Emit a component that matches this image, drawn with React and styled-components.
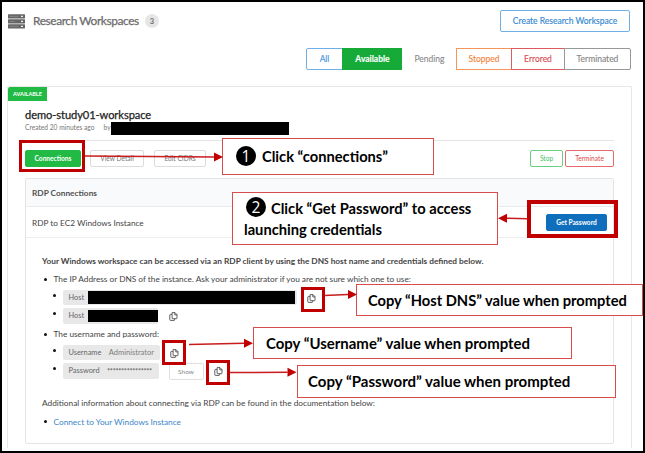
import React from "react";
import styled, { createGlobalStyle } from "styled-components";

const GlobalStyle = createGlobalStyle`
  *, *::before, *::after { box-sizing: border-box; }
  body { margin: 0; background: #fff; font-family: Lato, "Liberation Sans", sans-serif; color: #444; }
  button { font-family: inherit; margin: 0; padding: 0; }
  ul { list-style: none; margin: 0; padding: 0; }
  h1, h2, h3, p { margin: 0; }
`;

const Page = styled.main`
  position: relative;
  width: 645px;
  height: 453px;
  border: 2px solid #000;
  overflow: hidden;
  white-space: nowrap;
`;
const Header = styled.header`
  display: flex;
  justify-content: space-between;
  align-items: flex-start;
  height: 46px;
  padding: 8px 13px 0 6px;
`;
const TitleGroup = styled.div`
  display: flex;
  align-items: center;
  height: 24px;
  margin-top: -1px;
`;
const Title = styled.h1`
  margin-left: 8px;
  width: 106px;
  font-size: 11.9px;
  letter-spacing: -0.4px;
  line-height: 16px;
  font-weight: 400;
  color: #6b6b6b;
  -webkit-text-stroke: 0.25px #6b6b6b;
`;
const Count = styled.span`
  margin-left: 6px;
  width: 14px;
  height: 14px;
  border-radius: 50%;
  background: #e6e6e6;
  color: #6d6d6d;
  font-size: 7.5px;
  font-weight: 700;
  line-height: 15px;
  text-align: center;
`;
const CreateButton = styled.button`
  width: 130px;
  height: 22px;
  border: 1px solid #70aee6;
  border-radius: 2px;
  background: #fff;
  color: #3588d2;
  font-size: 8.5px;
  -webkit-text-stroke: 0.15px currentColor;
`;
const Filters = styled.nav`
  display: flex;
  justify-content: flex-end;
  height: 38px;
  padding-right: 12px;
`;
const tones = {
  blue: ["#fff", "#3e90da", "#70aee6"],
  green: ["#16ab39", "#fff", "#16ab39"],
  plain: ["#fff", "#8b8b8b", "transparent"],
  orange: ["#fff", "#f2843b", "#f4965a"],
  red: ["#fff", "#dc4a50", "#df5a60"],
  grey: ["#fff", "#858585", "#989898"],
};
const Filter = styled.button`
  width: ${(p) => p.$width}px;
  height: 22px;
  margin-right: ${(p) => (p.$tone === "grey" ? 0 : -1)}px;
  border: 1px solid ${(p) => tones[p.$tone][2]};
  border-radius: ${(p) => (p.$tone === "blue" ? "2px 0 0 2px" : p.$tone === "grey" ? "0 2px 2px 0" : "0")};
  background: ${(p) => tones[p.$tone][0]};
  color: ${(p) => tones[p.$tone][1]};
  font-size: 8.5px;
  font-weight: ${(p) => (p.$tone === "green" ? 700 : 400)};
  -webkit-text-stroke: 0.12px currentColor;
`;
const Card = styled.section`
  width: 625px;
  height: 362px;
  margin-left: 5px;
  border: 1px solid #e7e7e7;
  border-bottom: 0;
  border-radius: 2px 2px 0 0;
`;
const Status = styled.div`
  width: 39px;
  height: 14px;
  border-radius: 2px 0 0 0;
  background: #21ba45;
  color: #fff;
  font-size: 5.5px;
  font-weight: 700;
  line-height: 14px;
  text-align: center;
`;
const CardBody = styled.div`
  padding: 6px 17px 0 17px;
`;
const WorkspaceName = styled.h2`
  font-size: 11.1px;
  font-weight: 400;
  letter-spacing: -0.07px;
  line-height: 15px;
  color: #222;
  -webkit-text-stroke: 0.25px #222;
`;
const Meta = styled.div`
  display: flex;
  align-items: flex-start;
  height: 13px;
  font-size: 6.65px;
  line-height: 10px;
  color: #777;
`;
const Author = styled.span`
  display: flex;
  margin-left: 9px;
`;
const Redacted = styled.span`
  display: block;
  width: ${(p) => p.$width}px;
  height: ${(p) => p.$height}px;
  background: #000;
`;
const Actions = styled.div`
  display: flex;
  align-items: center;
  height: 35px;
  margin-top: 5px;
  border-top: 1px solid #e4e4e4;
`;
const actionTones = {
  green: ["#21ba45", "#fff", "#21ba45"],
  plain: ["#fff", "#777", "#dcdcdc"],
  stop: ["#fff", "#3ec35d", "#69d080"],
  danger: ["#fff", "#e0494c", "#e66a6c"],
  primary: ["#0f6fbd", "#fff", "#0f6fbd"],
};
const Action = styled.button`
  width: ${(p) => p.$width}px;
  height: 17px;
  margin-left: ${(p) => p.$gap || 0}px;
  border: 1px solid ${(p) => actionTones[p.$tone][2]};
  border-radius: 2px;
  background: ${(p) => actionTones[p.$tone][0]};
  color: ${(p) => actionTones[p.$tone][1]};
  font-size: 6.6px;
  line-height: 15px;
  font-weight: ${(p) => (p.$tone === "green" || p.$tone === "primary" ? 700 : 400)};
`;
const DangerActions = styled.div`
  display: flex;
  margin-left: auto;
`;
const Panel = styled.section`
  height: 266px;
  margin-top: 3px;
  border: 1px solid #e4e4e4;
  border-radius: 2px;
`;
const PanelTitle = styled.h3`
  height: 28px;
  padding-left: 6px;
  border-bottom: 1px solid #eaeaea;
  background: #f9fafb;
  color: #505050;
  font-size: 8.3px;
  font-weight: 700;
  line-height: 28px;
`;
const InstanceRow = styled.div`
  display: flex;
  align-items: center;
  justify-content: space-between;
  height: 31px;
  padding: 0 6px;
  border-bottom: 1px solid #eee;
  font-size: 8.25px;
`;
const InstanceName = styled.span`
  padding-top: 2px;
`;
const Details = styled.div`
  padding: 14px 16px 0;
  font-size: 8.27px;
  line-height: 18px;
`;
const Lead = styled.p`
  font-weight: 700;
  font-size: 8.3px;
`;
const Item = styled.li`
  display: flex;
  align-items: center;
  height: ${(p) => p.$height || 18}px;
  &::before {
    content: "";
    width: 3px;
    height: 3px;
    margin-right: ${(p) => (p.$nested ? 6.5 : 7)}px;
    margin-left: ${(p) => (p.$nested ? 11 : 1.5)}px;
    margin-top: ${(p) => (p.$nested ? -5 : 0)}px;
    border-radius: 50%;
    background: #111;
  }
`;
const Chip = styled.div`
  display: flex;
  align-items: center;
  gap: ${(p) => p.$gap}px;
  width: ${(p) => p.$width}px;
  height: 15.5px;
  padding-left: 6px;
  border-radius: 2px;
  background: #e8e8e8;
  color: #666;
  font-size: 7.4px;
`;
const Value = styled.span`
  color: #7c7c7c;
  font-size: 7.5px;
`;
const Mask = styled.span`
  color: #555;
  font-size: 7.2px;
  letter-spacing: -0.25px;
  padding-top: 1px;
`;
const CopyButton = styled.button`
  display: flex;
  width: 9px;
  height: 9px;
  margin-top: 1px;
  margin-left: ${(p) => p.$gap}px;
  border: 0;
  background: none;
  color: #444;
`;
const Show = styled.button`
  width: 35px;
  height: 17px;
  margin-left: 10px;
  border: 1px solid #e0e0e0;
  border-radius: 2px;
  background: #fff;
  color: #888;
  font-size: 6.5px;
`;
const Note = styled.p`
  margin-top: 14px;
`;
const DocLink = styled.a`
  color: #3d86c9;
`;

/* Annotation layer drawn over the page; offsets are measured from the outer frame. */
const Annotations = styled.div`
  position: absolute;
  inset: -2px;
  pointer-events: none;
`;
const Highlight = styled.div`
  position: absolute;
  left: ${(p) => p.$x}px;
  top: ${(p) => p.$y}px;
  width: ${(p) => p.$w}px;
  height: ${(p) => p.$h}px;
  border: ${(p) => p.$line || 3}px solid #c00000;
`;
const Callout = styled.div`
  position: absolute;
  left: ${(p) => p.$x}px;
  top: ${(p) => p.$y}px;
  width: ${(p) => p.$w}px;
  height: ${(p) => p.$h}px;
  padding-left: ${(p) => p.$indent}px;
  display: flex;
  flex-direction: column;
  justify-content: center;
  border: 1px solid #dc4b4b;
  background: #fff;
  color: #000;
  font-size: ${(p) => p.$size || 14.7}px;
  font-weight: 700;
  line-height: 21px;
`;
const CalloutLine = styled.div`
  display: flex;
  align-items: center;
`;
const Step = styled.span`
  width: 20px;
  height: 20px;
  margin: -2px ${(p) => p.$after}px 0 ${(p) => p.$before}px;
  border-radius: 50%;
  background: #000;
  color: #fff;
  font: 400 15.5px/20px "Open Sans", sans-serif;
  text-align: center;
`;
const ArrowCanvas = styled.svg`
  position: absolute;
  inset: 0;
`;

function ServerIcon() {
  return (
    <svg width="17" height="15" viewBox="0 0 17 15">
      {[0, 5, 10].map((y) => (
        <g key={y}>
          <rect y={y + 0.3} width="17" height="4.1" rx="0.5" fill="#666" />
          <path d={`M1.5 ${y + 2.4}h${y === 5 ? 5 : 9}`} stroke="#999" strokeWidth="0.6" />
          <rect x="13" y={y + 1.8} width="2" height="1.1" fill="#fff" />
        </g>
      ))}
    </svg>
  );
}

function Copy({ gap }) {
  return (
    <CopyButton $gap={gap} aria-label="Copy">
      <svg width="9" height="9" viewBox="0 0 9 9" fill="none" stroke="currentColor" strokeWidth="0.85">
        <path d="M3.1 .6H6L8 2.6V6.1Q8 6.7 7.4 6.7H3.7Q3.1 6.7 3.1 6.1Z" />
        <path d="M5.8 .8V2.9H8M3 2.4H1.5Q.8 2.4 .8 3V7.8Q.8 8.4 1.5 8.4H5Q5.6 8.4 5.6 7.8V6.8" />
      </svg>
    </CopyButton>
  );
}

const arrows = [
  [85, 156, 223, 157],
  [527, 218.8, 498, 218.3],
  [324, 295.6, 357, 294.4],
  [189, 344.5, 253, 343.2],
  [230, 372.6, 296.5, 372.3],
];

function Arrows() {
  return (
    <ArrowCanvas width="645" height="453">
      {arrows.map(([x1, y1, x2, y2]) => {
        const back = x2 > x1 ? x2 - 9 : x2 + 9;
        return (
          <g key={y1} fill="#c00000" stroke="none">
            <path d={`M${x1} ${y1}L${back} ${y2}`} stroke="#c91c1c" strokeWidth="1.5" />
            <path d={`M${x2} ${y2}L${back} ${y2 - 4.5}V${y2 + 4.5}Z`} />
          </g>
        );
      })}
    </ArrowCanvas>
  );
}

export default function App() {
  return (
    <Page>
      <GlobalStyle />
      <Header>
        <TitleGroup>
          <ServerIcon />
          <Title>Research Workspaces</Title>
          <Count>3</Count>
        </TitleGroup>
        <CreateButton>Create Research Workspace</CreateButton>
      </Header>
      <Filters>
        <Filter $tone="blue" $width={37}>All</Filter>
        <Filter $tone="green" $width={61}>Available</Filter>
        <Filter $tone="plain" $width={55}>Pending</Filter>
        <Filter $tone="orange" $width={56}>Stopped</Filter>
        <Filter $tone="red" $width={54}>Errored</Filter>
        <Filter $tone="grey" $width={67}>Terminated</Filter>
      </Filters>
      <Card>
        <Status>AVAILABLE</Status>
        <CardBody>
          <WorkspaceName>demo-study01-workspace</WorkspaceName>
          <Meta>
            Created 20 minutes ago
            <Author>by<Redacted $width={178} $height={13} /></Author>
          </Meta>
          <Actions>
            <Action $tone="green" $width={56}>Connections</Action>
            <Action $tone="plain" $width={54} $gap={9}>View Detail</Action>
            <Action $tone="plain" $width={52} $gap={10}>Edit CIDRs</Action>
            <DangerActions>
              <Action $tone="stop" $width={33}>Stop</Action>
              <Action $tone="danger" $width={49} $gap={2}>Terminate</Action>
            </DangerActions>
          </Actions>
          <Panel>
            <PanelTitle>RDP Connections</PanelTitle>
            <InstanceRow>
              <InstanceName>RDP to EC2 Windows Instance</InstanceName>
              <Action $tone="primary" $width={61}>Get Password</Action>
            </InstanceRow>
            <Details>
              <Lead>Your Windows workspace can be accessed via an RDP client by using the DNS host name and credentials defined below.</Lead>
              <ul>
                <Item>The IP Address or DNS of the instance. Ask your administrator if you are not sure which one to use:</Item>
                <Item $nested $height={19}>
                  <Chip $width={234} $gap={4}>Host<Redacted $width={207} $height={13} /></Chip>
                  <Copy gap={10.5} />
                </Item>
                <Item $nested $height={18}>
                  <Chip $width={95} $gap={4}>Host<Redacted $width={70} $height={12} /></Chip>
                  <Copy gap={11} />
                </Item>
                <Item $height={18}>The username and password:</Item>
                <Item $nested $height={19}>
                  <Chip $width={97} $gap={7.5}>Username<Value>Administrator</Value></Chip>
                  <Copy gap={10} />
                </Item>
                <Item $nested $height={18}>
                  <Chip $width={96} $gap={7.5}>Password<Mask>****************</Mask></Chip>
                  <Show>Show</Show>
                  <Copy gap={10} />
                </Item>
              </ul>
              <Note>Additional information about connecting via RDP can be found in the documentation below:</Note>
              <ul>
                <Item $height={19}><DocLink>Connect to Your Windows Instance</DocLink></Item>
              </ul>
            </Details>
          </Panel>
        </CardBody>
      </Card>
      <Annotations>
        <Highlight $x={19} $y={140} $w={66} $h={32} />
        <Highlight $x={527} $y={200} $w={91} $h={38} $line={4} />
        <Highlight $x={301} $y={287} $w={24} $h={25} />
        <Highlight $x={162} $y={340} $w={24} $h={25} />
        <Highlight $x={206} $y={360} $w={24} $h={25} />
        <Callout $x={222} $y={138} $w={212} $h={37} $indent={13}>
          <CalloutLine><Step $before={0} $after={6}>1</Step>Click “connections”</CalloutLine>
        </Callout>
        <Callout $x={232} $y={192} $w={266} $h={53} $indent={11}>
          <CalloutLine><Step $before={2} $after={5}>2</Step>Click “Get Password” to access</CalloutLine>
          <CalloutLine>launching credentials</CalloutLine>
        </Callout>
        <Callout $x={356} $y={284} $w={287} $h={32} $indent={11} $size={14.68}>Copy “Host DNS” value when prompted</Callout>
        <Callout $x={253} $y={327} $w={319} $h={32} $indent={12} $size={14.95}>Copy “Username” value when prompted</Callout>
        <Callout $x={297} $y={365} $w={319} $h={33} $indent={10} $size={15.02}>Copy “Password” value when prompted</Callout>
        <Arrows />
      </Annotations>
    </Page>
  );
}
